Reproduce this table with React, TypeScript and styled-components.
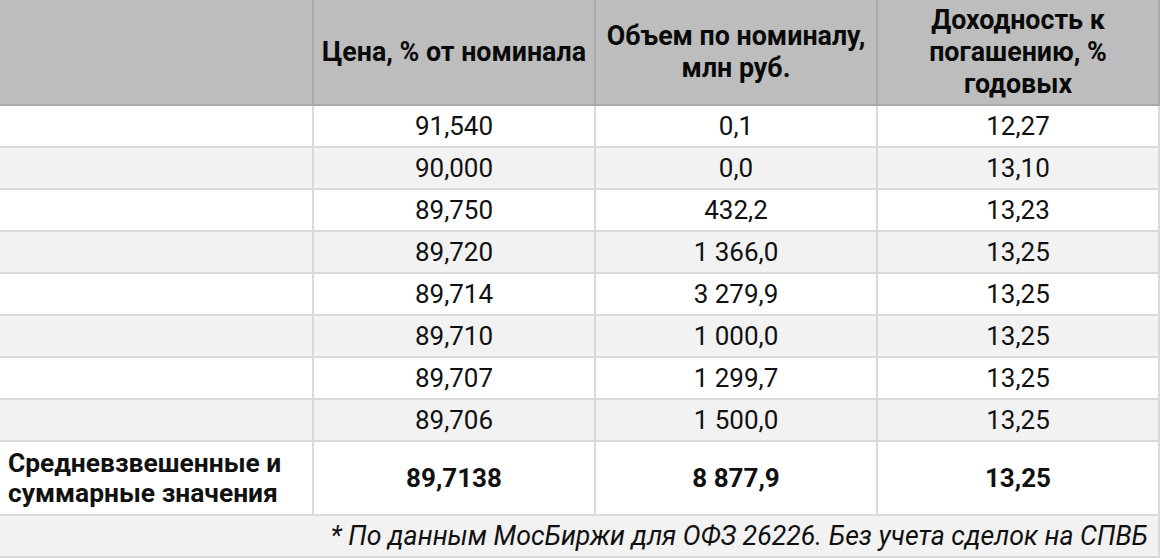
import React from 'react'
import styled, { createGlobalStyle } from 'styled-components'

const GlobalStyle = createGlobalStyle`
  html, body {
    margin: 0;
    padding: 0;
    background: #ffffff;
  }
  body {
    font-family: Roboto, 'Liberation Sans', sans-serif;
    color: #000000;
  }
`

const StyledTable = styled.table`
  width: 1160px;
  border-collapse: separate;
  border-spacing: 0;
  table-layout: fixed;
  font-size: 26px;
`

const StyledHeadCell = styled.th<{ $wide?: boolean }>`
  box-sizing: border-box;
  width: ${(p) => (p.$wide ? '314px' : '282px')};
  height: 106px;
  padding: 0 8px;
  background: #bdbdbd;
  border-right: 2px solid #aaaaaa;
  border-bottom: 2px solid #aaaaaa;
  font-size: 26.8px;
  font-weight: 700;
  line-height: 32px;
  text-align: center;
  vertical-align: middle;
  color: #0a0a0a;
`

const StyledRow = styled.tr<{ $odd: boolean }>`
  background: ${(p) => (p.$odd ? '#f2f2f2' : '#ffffff')};
`

const StyledCell = styled.td<{ $bold?: boolean; $left?: boolean; $tall?: boolean }>`
  box-sizing: border-box;
  height: ${(p) => (p.$tall ? '74px' : '42px')};
  padding: 0 8px;
  border-right: 2px solid #d9d9d9;
  border-bottom: 2px solid #d9d9d9;
  text-align: ${(p) => (p.$left ? 'left' : 'center')};
  vertical-align: middle;
  font-size: ${(p) => (p.$left ? '26.4px' : '26px')};
  font-weight: ${(p) => (p.$bold ? 700 : 400)};
  line-height: ${(p) => (p.$tall ? '30px' : '40px')};
  color: #111111;
`

const StyledNote = styled.td`
  box-sizing: border-box;
  height: 42px;
  padding: 0 10px;
  background: #f2f2f2;
  border-right: 2px solid #d9d9d9;
  border-bottom: 2px solid #d9d9d9;
  text-align: right;
  font-size: 26.7px;
  font-style: italic;
  color: #111111;
`

interface ITrade {
  price: string
  volume: string
  yieldValue: string
}

const trades: ITrade[] = [
  { price: '91,540', volume: '0,1', yieldValue: '12,27' },
  { price: '90,000', volume: '0,0', yieldValue: '13,10' },
  { price: '89,750', volume: '432,2', yieldValue: '13,23' },
  { price: '89,720', volume: '1 366,0', yieldValue: '13,25' },
  { price: '89,714', volume: '3 279,9', yieldValue: '13,25' },
  { price: '89,710', volume: '1 000,0', yieldValue: '13,25' },
  { price: '89,707', volume: '1 299,7', yieldValue: '13,25' },
  { price: '89,706', volume: '1 500,0', yieldValue: '13,25' },
]

const App: React.FC = () => {
  return (
    <>
      <GlobalStyle />
      <StyledTable>
        <thead>
          <tr>
            <StyledHeadCell $wide />
            <StyledHeadCell>Цена, % от номинала</StyledHeadCell>
            <StyledHeadCell>
              Объем по номиналу,
              <br />
              млн руб.
            </StyledHeadCell>
            <StyledHeadCell>
              Доходность к
              <br />
              погашению, %
              <br />
              годовых
            </StyledHeadCell>
          </tr>
        </thead>
        <tbody>
          {trades.map((trade, index) => (
            <StyledRow key={trade.price} $odd={index % 2 === 1}>
              <StyledCell />
              <StyledCell>{trade.price}</StyledCell>
              <StyledCell>{trade.volume}</StyledCell>
              <StyledCell>{trade.yieldValue}</StyledCell>
            </StyledRow>
          ))}
          <StyledRow $odd={false}>
            <StyledCell $bold $left $tall>
              Средневзвешенные и суммарные значения
            </StyledCell>
            <StyledCell $bold $tall>
              89,7138
            </StyledCell>
            <StyledCell $bold $tall>
              8 877,9
            </StyledCell>
            <StyledCell $bold $tall>
              13,25
            </StyledCell>
          </StyledRow>
          <tr>
            <StyledNote colSpan={4}>
              * По данным МосБиржи для ОФЗ 26226. Без учета сделок на СПВБ
            </StyledNote>
          </tr>
        </tbody>
      </StyledTable>
    </>
  )
}

export default App
